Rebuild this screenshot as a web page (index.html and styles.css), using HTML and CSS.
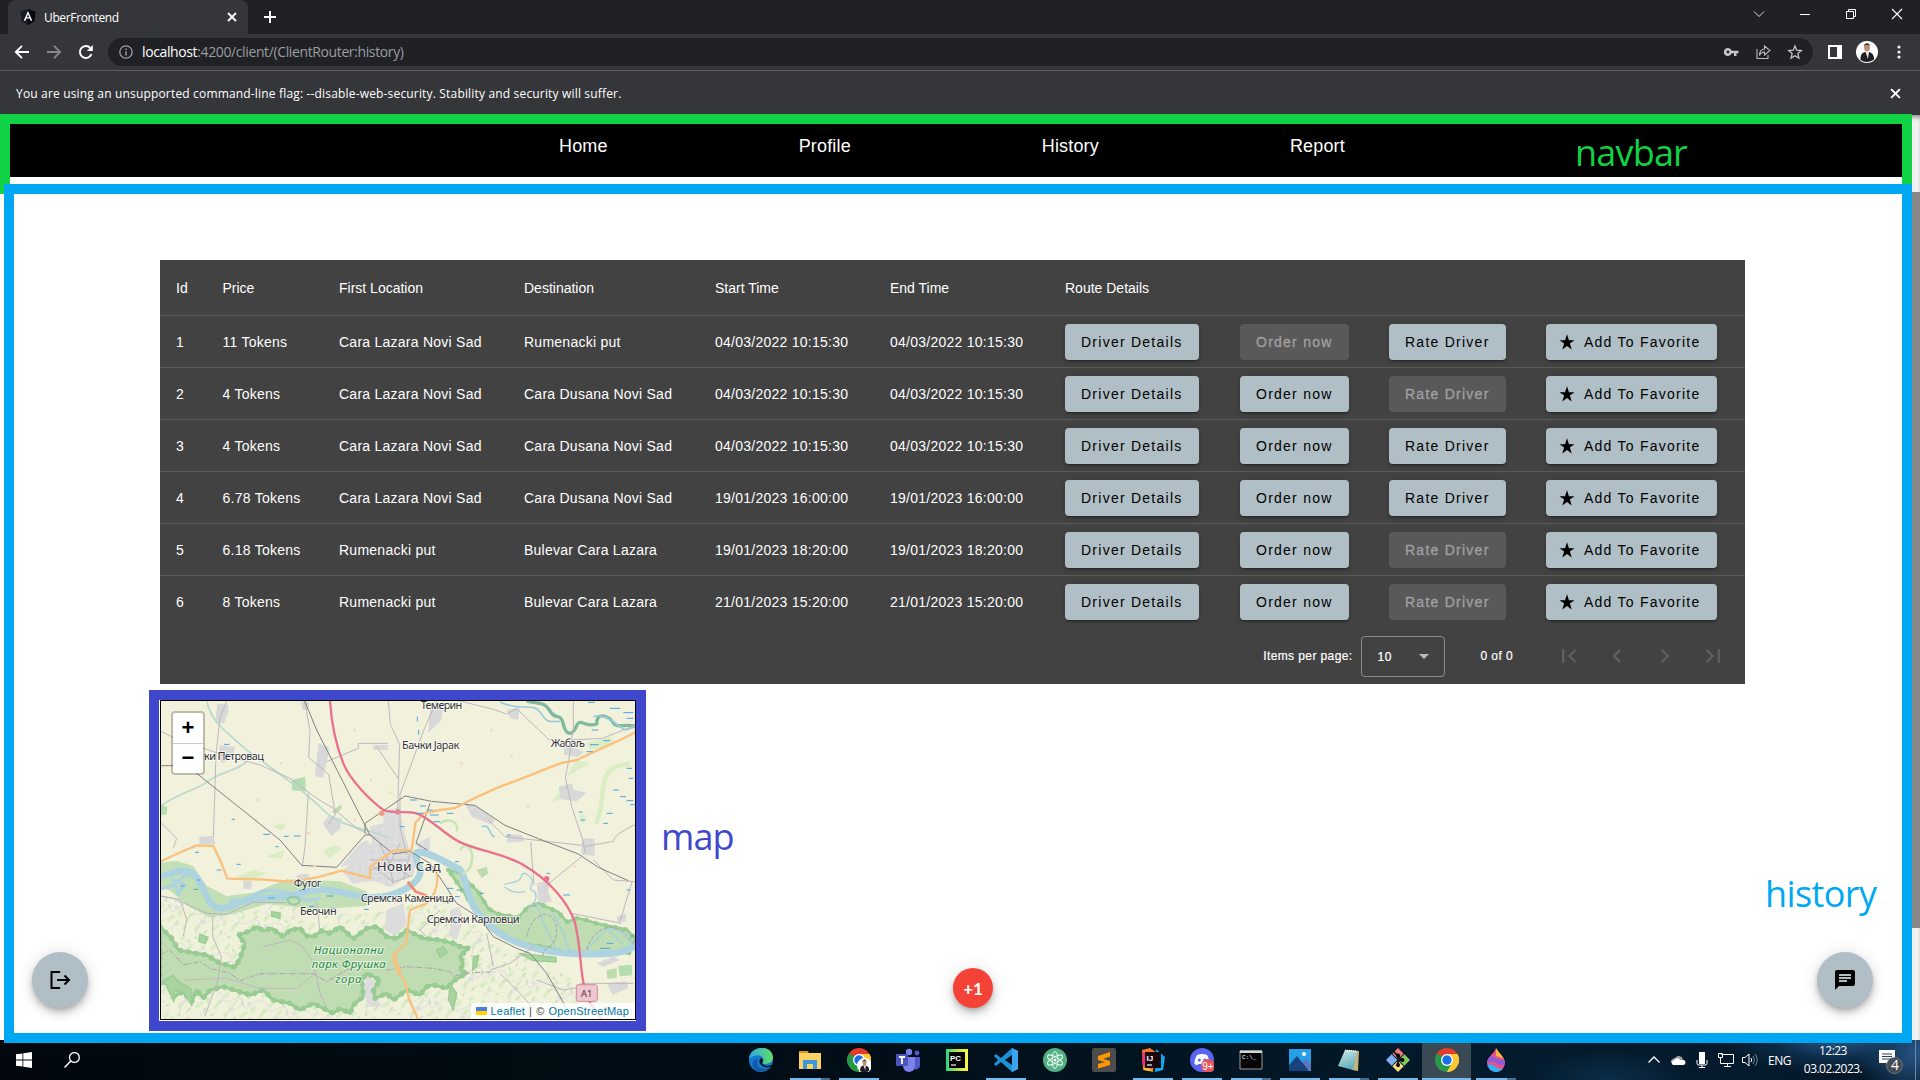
FILE: index.html
```html
<!DOCTYPE html>
<html lang="en">
<head>
<meta charset="utf-8">
<title>UberFrontend</title>
<link rel="stylesheet" href="styles.css">
</head>
<body>
<svg class="defs" aria-hidden="true">
  <symbol id="star" viewBox="0 0 24 24"><path d="M12 1.500 14.600 9.500H22l-6.200 4.600L18.300 22 12 17.300 5.700 22l2.500-7.900L2 9.500h7.400z"/></symbol>
  <symbol id="close" viewBox="0 0 10 10"><path d="M1 1 9 9M9 1 1 9" fill="none" stroke="currentColor" stroke-width="1.800"/></symbol>
  <symbol id="chrome" viewBox="0 0 24 24">
    <path d="M12 12 1.600 6A12 12 0 0 1 22.400 6z" fill="#e33b2e"/>
    <path d="M12 12 22.400 6A12 12 0 0 1 12 24z" fill="#fcc934"/>
    <path d="M12 12v12A12 12 0 0 1 1.600 6z" fill="#279847"/>
    <path d="M12 6h10.400a12 12 0 0 1 1 9L17 14z" fill="#fcc934"/>
    <path d="m17 15-5 9h-1l-3-6z" fill="#279847"/><path d="m17 15-5 9 5-1z" fill="#fcc934"/>
    <path d="m1.600 6 5.200 9L8 8z" fill="#279847"/>
    <circle cx="12" cy="12" r="6" fill="#fff"/><circle cx="12" cy="12" r="4.700" fill="#1a6fe8"/>
  </symbol>
  <symbol id="avatar" viewBox="0 0 22 22">
    <circle cx="11" cy="11" r="11" fill="#fff"/>
    <path d="M4.500 19c0-5 1-7 4.500-8h4c3.500 1 5 3 5 7.500A11 11 0 0 1 4.500 19z" fill="#1d1d22"/>
    <path d="M9.500 11h3.500l-1 7z" fill="#e8e8ea"/>
    <ellipse cx="11" cy="6.500" rx="2.900" ry="4" fill="#c08d72"/><path d="M8 6c-.3-5 6.300-5 6 0l-.8-2H9z" fill="#3a2820"/>
  </symbol>
</svg>

<header class="tabstrip">
  <div class="tab">
    <svg class="favicon" viewBox="0 0 16 16"><path d="M8 0 15.500 2.700 14.300 12.500 8 16 1.700 12.500.5 2.700z" fill="#151a24"/><path d="M8 0v16l6.300-3.500L15.500 2.700z" fill="#05080f"/><path d="M8 2 3.700 11.800h1.700l.9-2.200h3.400l.9 2.200h1.700zm0 3.200 1.200 3H6.800z" fill="#fff"/></svg>
    <span class="tab-title">UberFrontend</span>
    <svg class="tab-close"><use href="#close"/></svg>
  </div>
  <svg class="new-tab" viewBox="0 0 12 12"><path d="M6 0v12M0 6h12" stroke="#fff" stroke-width="2"/></svg>
  <div class="window-controls">
    <svg viewBox="0 0 12 12"><path d="m1 3.500 5 5 5-5" fill="none" stroke="#ddd"/></svg>
    <svg viewBox="0 0 12 12"><path d="M1 6.500h10" stroke="#fff"/></svg>
    <svg viewBox="0 0 12 12"><path d="M1.500 3.500h7v7h-7zM3.500 3.500v-2h7v7h-2" fill="none" stroke="#fff"/></svg>
    <svg viewBox="0 0 12 12"><path d="m1 1 10 10M11 1 1 11" stroke="#fff" stroke-width="1.100"/></svg>
  </div>
</header>

<div class="toolbar">
  <svg class="nav-icon" viewBox="0 0 16 16"><path d="M15 8H2M8 1.800 1.800 8 8 14.200" fill="none" stroke="#fff" stroke-width="1.900"/></svg>
  <svg class="nav-icon" viewBox="0 0 16 16"><path d="M1 8h13M8 1.800 14.200 8 8 14.200" fill="none" stroke="#85868a" stroke-width="1.900"/></svg>
  <svg class="nav-icon" viewBox="0 0 16 16"><path d="M13.500 10.200A6 6 0 1 1 12.400 4" fill="none" stroke="#fff" stroke-width="1.900"/><path d="M14.800 1v6h-6z" fill="#fff"/></svg>
  <div class="omnibox">
    <svg class="info" viewBox="0 0 14 14"><circle cx="7" cy="7" r="6.200" fill="none" stroke="#9aa0a6" stroke-width="1.300"/><path d="M7 6.200v4.300M7 3.500V5" stroke="#9aa0a6" stroke-width="1.500"/></svg>
    <span class="url"><b>localhost</b>:4200/client/(ClientRouter:history)</span>
    <span class="omni-icons">
      <svg viewBox="0 0 16 16"><path d="M5 4a4 4 0 1 0 3.700 5.300H11V12h2.500V9.300H15.500V6.700H8.700A4 4 0 0 0 5 4zm0 2.600a1.400 1.400 0 1 1 0 2.800 1.400 1.400 0 0 1 0-2.800z" fill="#c4c7ca"/></svg>
      <svg viewBox="0 0 16 16"><path d="M2 5v9.500h11V11M9.500 5V2l5.500 4.500L9.500 11V8C7 8 5.500 9 4.500 11.500 4.500 7.500 6.500 5.300 9.500 5z" fill="none" stroke="#b9bcc0" stroke-width="1.100"/></svg>
      <svg viewBox="0 0 24 24"><path d="m12 3 2.600 6.300 6.900.6-5.200 4.500 1.600 6.700L12 17.500l-5.900 3.600 1.600-6.700L2.500 9.900l6.900-.6z" fill="none" stroke="#c4c7ca" stroke-width="1.900"/></svg>
    </span>
  </div>
  <svg class="panel" viewBox="0 0 14 14"><path d="M0 0h14v14H0zM2 2v10h7V2z" fill="#fff" fill-rule="evenodd"/></svg>
  <svg class="avatar"><use href="#avatar"/></svg>
  <svg class="more" viewBox="0 0 4 14"><g fill="#f1f1f1"><circle cx="2" cy="2" r="1.600"/><circle cx="2" cy="7" r="1.600"/><circle cx="2" cy="12" r="1.600"/></g></svg>
</div>

<div class="infobar">
  <span>You are using an unsupported command-line flag: --disable-web-security. Stability and security will suffer.</span>
  <svg><use href="#close"/></svg>
</div>

<main class="viewport">
  <div class="page">
    <nav class="navbar"><a>Home</a><a>Profile</a><a>History</a><a>Report</a></nav>
    <section class="history">
      <div class="history-table">
        <div class="row head"><span>Id</span><span>Price</span><span>First Location</span><span>Destination</span><span>Start Time</span><span>End Time</span><span>Route Details</span></div>
        <div class="row"><span>1</span><span>11 Tokens</span><span>Cara Lazara Novi Sad</span><span>Rumenacki put</span><span>04/03/2022 10:15:30</span><span>04/03/2022 10:15:30</span><button>Driver Details</button><button disabled>Order now</button><button>Rate Driver</button><button class="fav"><svg><use href="#star"/></svg>Add To Favorite</button></div>
        <div class="row"><span>2</span><span>4 Tokens</span><span>Cara Lazara Novi Sad</span><span>Cara Dusana Novi Sad</span><span>04/03/2022 10:15:30</span><span>04/03/2022 10:15:30</span><button>Driver Details</button><button>Order now</button><button disabled>Rate Driver</button><button class="fav"><svg><use href="#star"/></svg>Add To Favorite</button></div>
        <div class="row"><span>3</span><span>4 Tokens</span><span>Cara Lazara Novi Sad</span><span>Cara Dusana Novi Sad</span><span>04/03/2022 10:15:30</span><span>04/03/2022 10:15:30</span><button>Driver Details</button><button>Order now</button><button>Rate Driver</button><button class="fav"><svg><use href="#star"/></svg>Add To Favorite</button></div>
        <div class="row"><span>4</span><span>6.78 Tokens</span><span>Cara Lazara Novi Sad</span><span>Cara Dusana Novi Sad</span><span>19/01/2023 16:00:00</span><span>19/01/2023 16:00:00</span><button>Driver Details</button><button>Order now</button><button>Rate Driver</button><button class="fav"><svg><use href="#star"/></svg>Add To Favorite</button></div>
        <div class="row"><span>5</span><span>6.18 Tokens</span><span>Rumenacki put</span><span>Bulevar Cara Lazara</span><span>19/01/2023 18:20:00</span><span>19/01/2023 18:20:00</span><button>Driver Details</button><button>Order now</button><button disabled>Rate Driver</button><button class="fav"><svg><use href="#star"/></svg>Add To Favorite</button></div>
        <div class="row"><span>6</span><span>8 Tokens</span><span>Rumenacki put</span><span>Bulevar Cara Lazara</span><span>21/01/2023 15:20:00</span><span>21/01/2023 15:20:00</span><button>Driver Details</button><button>Order now</button><button disabled>Rate Driver</button><button class="fav"><svg><use href="#star"/></svg>Add To Favorite</button></div>
        <div class="paginator">
          <span>Items per page:</span>
          <div class="select"><span>10</span><i></i></div>
          <span class="range">0 of 0</span>
          <div class="pager">
            <svg viewBox="0 0 24 24"><path d="M18.410 16.590 13.820 12l4.590-4.590L17 6l-6 6 6 6zM6 6h2v12H6z"/></svg>
            <svg viewBox="0 0 24 24"><path d="M15.410 7.410 14 6l-6 6 6 6 1.410-1.410L10.830 12z"/></svg>
            <svg viewBox="0 0 24 24"><path d="M10 6 8.590 7.410 13.170 12l-4.580 4.590L10 18l6-6z"/></svg>
            <svg viewBox="0 0 24 24"><path d="M5.590 7.410 10.180 12l-4.590 4.590L7 18l6-6-6-6zM16 6h2v12h-2z"/></svg>
          </div>
        </div>
      </div>

      <div class="map-row">
        <div class="map-mark">
          <div class="map">
            <svg class="tiles" viewBox="63 63 1422 954" preserveAspectRatio="none">
              <defs>
                <pattern id="hills" width="137" height="119" patternUnits="userSpaceOnUse" patternTransform="rotate(12)">
                  <rect width="137" height="119" fill="#eff1db"/>
                  <path d="M4 20 14 4l6 3-8 20zM30 40l12-14 6 4-9 18zM66 18l10-12 7 6-12 12zM10 82l9-26 7 4-9 28zM58 64l14-20 5 6-11 18zM100 30l12-22 8 6-14 24zM90 90l18-20 6 8-16 18zM40 100l10-18 8 6-12 20zM120 60l10-10 2 18-10 8z" fill="#d9ebc4"/>
                  <path d="m22 66 8-12M48 12l4-10M74 36l8-12M36 26l-8-8M70 110l10-14M118 100l6-12M94 56l-6-10M6 108l8-8" stroke="#c0dfb0" stroke-width="4"/>
                  <path d="M0 34q24-6 30 14t32-2 32 8 40-24M50 119q-6-30 14-40t30-30M110 119q4-20 27-24" fill="none" stroke="#d6d1d6" stroke-width="2"/>
                  <path d="M52 72l14-4 4 12-12 4zM108 42l10 2-4 12-8-4z" fill="#dedede"/>
                </pattern>
                <pattern id="blocks" width="20" height="20" patternUnits="userSpaceOnUse"><rect width="20" height="20" fill="#dadada"/><path d="M0 6h20M8 0v20" stroke="#e4e4e2" stroke-width="2"/></pattern>
                <path id="park" d="M60 740 95 775 115 810 165 820 200 825 240 850 285 862 300 835 315 790 295 765 325 755 350 740 370 752 395 745 430 770 450 750 480 745 500 768 520 770 545 752 570 760 600 740 640 776 680 745 710 740 740 770 770 776 800 750 850 775 900 780 940 790 960 800 985 805 960 830 970 850 960 870 980 880 945 900 920 925 880 915 860 920 840 945 800 930 760 960 740 940 705 955 700 930 720 900 680 880 665 900 670 950 640 975 630 1000 600 985 580 1000 520 970 480 990 450 970 400 960 370 930 330 945 250 920 210 930 190 955 170 930 155 965 130 935 100 950 85 910 60 910z"/>
                <path id="wetland" d="m925 570 30 6 60 60 30 50 30 16 60 10 30-32 30-10 60 26 26 30 30-12 30 7 30 10 90 18 26 30-20 40-180 0-80-20-80-10-84-60-40-40-30-50z"/>
              </defs>
              <rect x="60" y="60" width="1430" height="960" fill="#f2f1dc"/>
              <path d="M60 650 200 680 260 700 350 670 460 665 560 700 700 700 800 680 890 640 980 700 1050 790 1200 840 1300 900 1330 1020H60z" fill="url(#hills)"/>
              <!-- fields and meadows -->
              <path d="m455 300 40-10 3 45-42-4zM60 375l22 5-2 22-20 4zM1435 857l40-3 2 32-38 3z" fill="#b5deb0"/>
              <path d="m290 590 50-20 40 10-60 25zM400 440l20-12 20 10-16 14zM375 530l60-20-10 26zM550 510l36-14 20 10-40 30zM340 420l14-8-3 14zM740 340l20-8-6 14zM1340 190l70-20 20 20-80 20zM1310 240l40 10-70 40zM1320 400l16 6-6 26-12-10zM1235 365l30-40 10 30z" fill="#dbedc5"/>
              <path d="M1470 252q-74 0-80 70t-22 110" fill="none" stroke="#dbedc5" stroke-width="14"/>
              <path d="m1400 870 30-6v30l-28 2zM1200 700l20 6-10 10zM575 395l28-22 3 12-20 18zM1010 570l30-10 5 20-20 14z" fill="#bcdcae"/>
              <!-- settlements -->
              <g fill="#d8d8d8">
                <path d="m232 70 32 4 2 20-14 36-26-2zM240 196l44 4-4 30-30 20-18-14zM482 63l26 4-4 24-16-2zM535 190l32 12-4 30-14 62-24-6zM870 90l40-20-6 50-40 40zM548 430l20-24 38 10-6 30-26 22zM178 470l40-2 10 24-50 2zM470 585l34-4 10 24-40 4zM310 604l26 0-2 24-24-2z"/>
                <path d="m1100 90 40-10-6 40-24-6zM1256 320l40-10 6 20 38 8-30 26-48-6zM1272 190l20 6 40 20-20 16-40-8zM1330 475l34 2v50l-40-2v-30zM975 372l30 4 60 44-10 14-60-24zM1100 464l46 0 6 20-50 4zM1190 610l40-10-6 34 12 30-40 10zM1430 710l28-10 0 24-24 4zM1400 910l60-6 4 20-46 20zM1440 840l-50 20-20-10 50-20zM700 195h44v14h-44z"/>
              </g>
              <path d="m690 440 50-14 46 6 24 84 24 20-14 46-70 40-50-20-60 10-34-40 60-50 30-36zM728 395l50-14 10 50-56 10zM830 490l40-20v40l-34 10z" fill="url(#blocks)"/>
              <path d="m600 560 60-70 24-10 10 30-30 40zM740 690l50-20 10 60-36 40-28-20zM680 890l24 10-2 40 24 40-40 0-16-40zM930 690l30-10 10 40-20 60-20-10z" fill="#dcdcdc"/>
              <!-- national park -->
              <use href="#park" fill="#c0dcb3" stroke="#98cc93" stroke-width="9" stroke-linejoin="round"/>
              <use href="#park" fill="none" stroke="#98cc93" stroke-width="16" stroke-linecap="round" stroke-dasharray="1 23"/>
              <path d="m70 900 30-14 12 16 40 24 4 52-24-40-30-6 0 34zM180 762l24 10-8 18-20-6zM395 695l26 4-2 16-24-6zM1000 830l16-4-6 34-12 10zM930 910l20 30-10 50-14-30zM890 810l20-10 12 18-22 14z" fill="#a8d39f" stroke="#98cc93" stroke-width="4"/>
              <!-- wetlands along the river -->
              <path d="m60 548 50-6 50 16 40 60 60 30 80-10 100-40 160 6 80 30v44l-140 10-160-16-100 30-70 10-60-30-60-50-40-20-30 4z" fill="#c3dfb6"/>
              <use href="#wetland" fill="#c0dcb3" stroke="#98cc93" stroke-width="8" stroke-linejoin="round"/>
              <use href="#wetland" fill="none" stroke="#98cc93" stroke-width="14" stroke-linecap="round" stroke-dasharray="1 29"/>
              <path d="m1138 820 110 12v14l-70-4z" fill="#aad6a2" stroke="#98cc93" stroke-width="4"/>
              <!-- Danube -->
              <path d="M60 590c40-10 60-25 90-14 30 14 40 60 60 90 16 24 40 24 70 10 40-24 100-20 150-26 50-6 80-26 130-20 60 6 100 26 150 22 60-4 120-36 130-70 6-28-20-40-10-64 20-10 70 20 130 50 20 30 20 70 40 110 24 40 70 90 150 116 80 30 200 30 270 26 40-6 60-20 75-26" fill="none" stroke="#acd3df" stroke-width="20"/>
              <path d="M60 625c60 0 60-50 100-40M270 660c70 10 70-40 150-26s60 40 120 20M100 600l34 14-20 26z" fill="none" stroke="#acd3df" stroke-width="10"/>
              <path d="M60 648 100 655 200 700 260 703 340 667 440 668" fill="none" stroke="#b8b2bb" stroke-width="3"/>
              <path d="M442 658c8-12 34-8 38 4-6 14-32 18-38-4z" fill="none" stroke="#93c9a5" stroke-width="6"/>
              <path d="M1094 615c0-10 40 0 50-24 2-20 16-10 30 4s-20 30 10 40c12 20-6 40-18 50M1094 620c20 20 40 20 60 14M1190 670l20 60 40 80M1240 700l30 60 20 60M1340 810l60-66 40 10 40 40M1400 744l50 50" fill="none" stroke="#a6d0e0" stroke-width="4"/>
              <path d="M1160 770c20-90 90-80 90-20s-50 50-40 80M1340 810c20-70 90-100 140-20" fill="none" stroke="#a8a3a8" stroke-width="3" stroke-dasharray="12 5"/>
              <!-- streams -->
              <path d="M200 60c10 60 50 90 120 150 80 60 160 110 230 180 40 40 90 50 140 64l60 20M60 380c50-40 120-54 140-74 40-30 80-30 120-60" fill="none" stroke="#b7d9cd" stroke-width="5"/>
              <path d="M1160 63c30 10 50-2 70 30s30 0 40 40 30 30 40 4 30 10 60-6c0-40 40-20 50-2s40 0 65 10" fill="none" stroke="#7fba9e" stroke-width="10"/>
              <path d="M1360 110c20-10 60 10 80 30s30 0 48 2M1080 66c60 30 100 0 120 30s20 30 60 28M1025 440c30-10 20 30 40 30" fill="none" stroke="#9dcadb" stroke-width="5"/>
              <path d="M960 510c20-30 40 0 36 30s-20 40-30 40M900 430c30-20 60 0 50 24" fill="none" stroke="#c9e5b7" stroke-width="8"/>
              <!-- minor roads -->
              <g fill="none" stroke="#bdb8bf" stroke-width="3">
                <path d="M60 152 110 178M190 205l60 20 110 30 90 40 80 60 50 30 70 60 60 30M260 63l-20 50-12 110-8 250M60 425l50 50-10 30M505 340l-10 160-8 60M494 63l16 90-4 80 60 50 20 120-22 30M560 245l95-40v-15h90M710 200l65 96M745 63l6 70 28 60-6 200M890 63l-40 90-40 110-30 80v100l20 80"/>
                <path d="m960 63 100 25 40 14 30-16 100 96M1300 63v80l-14 100-10 50 20 90 30 90 10 46M1045 420l50 50 230 26M1172 485l10 130M1325 530l-110 90M1330 500l90-16q0-20 65-50M1476 605l-36 120M1294 700l150 30M1488 135l-100 40-100 5M1360 540l60 60 65 5"/>
                <path d="m218 710 0 60 26 60-10 70-40 110M60 648l60 10 20 60-10 50M530 665l10 90M525 870l15 70 20 44M900 690l-60 60 30 30M1050 870l60-20 70-50M1040 760l20 100M1190 900l80 30 60-10M1320 910h160M1080 880l60 60 70 80M370 800l80-20 40 20 30 50"/>
                <path d="m700 560 60 46 60-20M720 490l20 50 70 50M740 520l20 90M780 490l-30 60-60 20M810 520l-20 80M690 540l110 0"/>
              </g>
              <path d="M60 825 90 810 130 855 180 845 210 865 270 880 300 902 360 881H520L560 905 620 870 680 850 740 870 800 860 880 865 930 875 940 890 970 880 1060 875" fill="none" stroke="#b09fb1" stroke-width="3" stroke-dasharray="16 5 5 5"/>
              <path d="M130 900 260 895 360 925 470 925 520 885" fill="none" stroke="#c4b9c2" stroke-width="3"/>
              <!-- railways -->
              <g fill="none" stroke="#808080" stroke-width="3">
                <path d="M494 63 530 150 690 465 760 522 810 514 870 550 905 600 950 670 1020 715 1060 770 1130 805 1170 820 1220 880 1280 985"/>
                <path d="M60 257h40M170 280 420 480 485 556 590 562 675 465 690 465M675 430l120-82 80 16 130 12 90 60 100 40 120 46 60 40 90 40M870 370l-42 120 34 20M675 430v30"/>
              </g>
              <!-- main roads -->
              <path d="M60 545 110 522 170 496 220 498 240 540 262 596 360 598 460 606 540 590 605 572 690 594 690 560 760 512 815 510 826 430 850 400 900 390 945 384 1000 356 1080 320 1160 290 1260 250 1310 240 1370 212 1440 180 1490 155M890 580q10 50-30 90l-50 20-12 100-34 30 10 60 20 20 14 60 32 70" fill="none" stroke="#f8c17d" stroke-width="7" stroke-linejoin="round"/>
              <path d="m762 820 4 30 16 28" fill="none" stroke="#f8c17d" stroke-width="11"/>
              <path d="M803 605l24 30 34 12" fill="none" stroke="#f28b6d" stroke-width="8"/>
              <path d="M570 63C575 140 590 200 610 250S690 360 730 390c30 12 70 2 100 10 40 14 80 60 125 84 60 30 140 36 200 74 70 40 130 110 150 170 20 80 14 150 30 200 6 30 20 50 30 60l20 30" fill="none" stroke="#e8718c" stroke-width="7"/>
              <circle cx="773" cy="396" r="8" fill="#e08a8c"/><circle cx="725" cy="400" r="8" fill="#f49a80"/><circle cx="1220" cy="596" r="8" fill="#e8718c"/>
              <!-- ponds and canals -->
              <path d="M252 193h16M275 418h10M370 463h20M432 469h14M462 468h20M406 500h10M165 517h12M290 553h12M230 570h14M170 600h10M120 618h14M160 628h14M480 632h16M560 648h20M385 654h18M508 679h16M568 686h18M672 688h14M832 110v14M836 150v14M810 360h20M840 378h18M860 390h18M830 400h20M780 440h14M950 630h16M920 625h20M945 650h14M1270 645h20M1345 67h20M1410 85h30M1450 98h30M1460 115h20M1355 150h20M1390 182h20M1350 194h26M1340 215h18M1460 265h16M1466 295h14M1420 330h16M1440 350h18M1470 374h14M1400 400h18M1390 430h14M1460 362h20M1316 396h12M1322 420h14M1400 790h20M1380 805h30M1470 768h14M1460 630h12M1100 465h12M1020 640h12M870 405h26M880 425h20M920 400h20M945 545h12M1220 580h10" stroke="#45a4e6" stroke-width="3"/>
              <path d="M150 220h12M520 560h8M640 420h8M690 300h6M420 250h8M350 360h8M500 460h12M100 520h8M640 150h8M1110 230h8M1160 380h8M960 250h10M1050 150h8M1300 560h8" stroke="#f6d9c0" stroke-width="8"/>
              <g class="map-labels">
                <text x="842" y="87" textLength="125">Темерин</text>
                <text x="786" y="208" textLength="172">Бачки Јарак</text>
                <text x="1232" y="201" textLength="103">Жабаљ</text>
                <text x="192" y="241" textLength="180">ки Петровац</text>
                <text x="710" y="572" textLength="192" class="city">Нови Сад</text>
                <text x="461" y="621" textLength="84">Футог</text>
                <text x="662" y="667" textLength="280">Сремска Каменица</text>
                <text x="480" y="706" textLength="110">Беочин</text>
                <text x="860" y="728" textLength="279">Сремски Карловци</text>
                <text x="521" y="822" textLength="210" class="park">Национални</text>
                <text x="515" y="865" textLength="222" class="park">парк Фрушка</text>
                <text x="586" y="908" textLength="78" class="park">гора</text>
              </g>
              <rect x="1309" y="914" width="63" height="50" rx="6" fill="#ecc8d0" stroke="#d5899c" stroke-width="3"/>
              <text x="1323" y="951" class="shield">A1</text>
            </svg>
            <div class="zoom"><span>+</span><span>−</span></div>
            <div class="credit"><i></i><a>Leaflet</a><span>|</span><span>©</span><a>OpenStreetMap</a></div>
          </div>
        </div>
        <span class="note note-map">map</span>
      </div>
    </section>
  </div>
  <div class="scrollbar"><i></i></div>

  <button class="fab logout"><svg viewBox="0 0 24 24"><path d="M12.200 4H3.500v16h8.700M9 12h11.500M16.500 7.500 21 12l-4.500 4.500" fill="none" stroke="#000" stroke-width="2"/></svg></button>
  <button class="fab chat"><svg viewBox="0 0 24 24"><path d="M20 2H4a2 2 0 0 0-1.990 2L2 22l4-4h14a2 2 0 0 0 2-2V4a2 2 0 0 0-2-2zM6 9h12v2H6zm8 5H6v-2h8zm4-6H6V6h12z"/></svg></button>
  <button class="fab plus">+1</button>
  <div class="frame frame-nav"></div>
  <div class="frame frame-history"></div>
  <span class="note note-navbar">navbar</span>
  <span class="note note-history">history</span>
</main>

<footer class="taskbar">
  <svg class="start" viewBox="0 0 16 16"><path d="M0 2.300 6.500 1.400v6.100H0zM7.300 1.200 16 0v7.500H7.300zM0 8.400h6.500v6.200L0 13.700zM7.300 8.400H16V16l-8.700-1.200z" fill="#fff"/></svg>
  <svg class="search" viewBox="0 0 16 16"><circle cx="10.400" cy="5.500" r="4.900" fill="none" stroke="#fff" stroke-width="1.300"/><path d="M6.800 9 .5 15.500" stroke="#fff" stroke-width="1.500"/></svg>
  <div class="apps">
    <span class="app"><svg viewBox="0 0 24 24"><defs><linearGradient id="eg" x1="0" x2="1"><stop stop-color="#2aa9e8"/><stop offset="1" stop-color="#62de62"/></linearGradient></defs><circle cx="12" cy="12" r="12" fill="#1479cf"/><path d="M0 11C1-3 23-4 24 9c0 5-4 7-8 7-3 0-3-2-2-3 2-5-6-9-14-2z" fill="url(#eg)"/><path d="M9 11c-4 7 3 12 12 9-6 6-18 4-17-4 0-3 2-5 5-5z" fill="#1558a6"/><path d="M14 13c-3 4 4 7 10 3v2c-7 4-16-1-13-7 1-1 4 0 3 2z" fill="#06131f"/></svg></span>
    <span class="app open multi"><svg viewBox="0 0 24 24"><path d="M1 3h9l1 3h-10z" fill="#d99a17"/><path d="M1 5h22v16H1z" fill="#fbd065"/><path d="M5 12h14v9h-4v-5H9v5H5z" fill="#3e97dc"/></svg></span>
    <span class="app open"><svg viewBox="0 0 24 24"><use href="#chrome"/><use href="#avatar" x="10" y="10" width="15" height="15"/></svg></span>
    <span class="app"><svg viewBox="0 0 24 24"><circle cx="13" cy="4" r="3.200" fill="#7b83eb"/><circle cx="21" cy="5" r="2.400" fill="#5059c9"/><path d="M15 9h9v7a4 4 0 0 1-9 2z" fill="#5059c9"/><path d="M7 9h12v9a6 6 0 0 1-12 0z" fill="#7b83eb"/><rect y="6" width="12" height="12" rx="1" fill="#4b53bc"/><path d="M3 9h6M6 9v7" stroke="#fff" stroke-width="1.800"/></svg></span>
    <span class="app"><svg viewBox="0 0 24 24"><defs><linearGradient id="pc" x1="0" x2="1"><stop stop-color="#21d789"/><stop offset=".5" stop-color="#b5e33b"/><stop offset="1" stop-color="#fcf84a"/></linearGradient></defs><path d="M1 1h22v22H1z" fill="url(#pc)"/><path d="M4 4h16v16H4z"/><text x="5" y="12.500" class="ico8">PC</text><path d="M6 17h5" stroke="#fff" stroke-width="1.200"/></svg></span>
    <span class="app open"><svg viewBox="0 0 24 24"><path d="m18 0 6 3v18l-6 3L7 14l-5 4-2-2 4-4-4-4 2-2 5 4zm0 7-7 5 7 5z" fill="#1f8fd8"/><path d="m18 0 6 3v18l-6 3z" fill="#3ba5ef"/></svg></span>
    <span class="app"><svg viewBox="0 0 24 24"><circle cx="12" cy="12" r="12" fill="#50b083"/><g fill="none" stroke="#e8f6ee" stroke-width="1"><ellipse cx="12" cy="12" rx="3" ry="8.500"/><ellipse cx="12" cy="12" rx="3" ry="8.500" transform="rotate(60 12 12)"/><ellipse cx="12" cy="12" rx="3" ry="8.500" transform="rotate(-60 12 12)"/></g><circle cx="12" cy="12" r="1.500" fill="#fff"/></svg></span>
    <span class="app"><svg viewBox="0 0 24 24"><rect width="24" height="24" rx="2" fill="#4c4c4c"/><path d="m6 8 12-4v4.500L11 11l7 2v4L6 20.500V16l7-2-7-2z" fill="#ff9800"/></svg></span>
    <span class="app open"><svg viewBox="0 0 24 24"><path d="M1 2 9 0l7 5-4 18-10-1z" fill="#f9762f"/><path d="m2 4 7 4-5 12-3-6z" fill="#f62c78"/><path d="m15 1 9 8-2 13-8 2z" fill="#12a7f0"/><path d="m4 18 9 6-10-2z" fill="#fdc82f"/><path d="M4 4h16v16H4z" fill="#17070f"/><text x="5.500" y="12.500" class="ico8">IJ</text><path d="M6 17h5" stroke="#fff" stroke-width="1.200"/></svg></span>
    <span class="app open"><svg viewBox="0 0 24 24"><circle cx="12" cy="12" r="12" fill="#5865f2"/><path d="M7 7q5-2 10 0 3 5 2.500 9-3 2-4 0h-7q-1 2-4 0Q4 12 7 7z" fill="#fff"/><circle cx="9.300" cy="12" r="1.500" fill="#5865f2"/><circle cx="14.700" cy="12" r="1.500" fill="#5865f2"/><circle cx="18" cy="18" r="7" fill="#e4565c"/><text x="12.200" y="21.500" class="ico9">9+</text></svg></span>
    <span class="app open multi"><svg viewBox="0 0 24 24"><path d="M1 3h22v18H1z" fill="#050505" stroke="#9a9a9a"/><path d="M1 2.500h22v2.500H1z" fill="#d6d6d6"/><text x="3" y="11" class="ico6">C:\_</text></svg></span>
    <span class="app open"><svg viewBox="0 0 24 24"><path d="M1 1h22v22H1z" fill="#269ee8"/><path d="M13 16 18 11l5 5v7z" fill="#5d72bb"/><path d="M1 17 9 8l12 15H1z" fill="#17437d"/><circle cx="16" cy="6" r="2" fill="#fff"/></svg></span>
    <span class="app open multi"><svg viewBox="0 0 24 24"><defs><linearGradient id="np" y1="0" y2="1" x2=".4"><stop stop-color="#d4e9eb"/><stop offset="1" stop-color="#5fb0bb"/></linearGradient></defs><path d="M9 2 22 3l-1 20-6-1z" fill="#c9b27a"/><path d="M8 2 20 3l-4 19-15-4z" fill="url(#np)"/><path d="M8 2.500 20 3.500" stroke="#eee" stroke-width="2" stroke-dasharray="1 1"/></svg></span>
    <span class="app open"><svg viewBox="0 0 24 24"><g transform="rotate(45 12 12)"><path d="M3.500 3.500h8v8h-8z" fill="#f07d7c"/><path d="M12.500 3.500h8v8h-8z" fill="#80cd5b"/><path d="M3.500 12.500h8v8h-8z" fill="#7fb0f5"/><path d="M12.500 12.500h8v8h-8z" fill="#fbd97a"/></g><path d="m8 4 8 8h-4v7M12 7v8" fill="none" stroke="#141b22" stroke-width="1.800"/><circle cx="12" cy="7.500" r="2"/><circle cx="16.500" cy="12" r="2"/><circle cx="12" cy="17" r="2"/></svg></span>
    <span class="app open active"><svg><use href="#chrome"/></svg></span>
    <span class="app open multi"><svg viewBox="0 0 24 24"><defs><clipPath id="drop"><path d="M12 0c3 6 9 9 9 15a9 9 0 0 1-18 0C3 9 10 6 12 0z"/></clipPath></defs><g clip-path="url(#drop)"><path d="M0 0h24v24H0z" fill="#e8508f"/><path d="M12 0h9l3 12-12-4z" fill="#fbb934"/><path d="M0 13q6-7 12-3t12 0v5q-8 4-12 0t-12 3z" fill="#8c5bd6"/><path d="M0 19q7-5 12 0t12-3v8H0z" fill="#29b6f6"/></g></svg></span>
  </div>
  <div class="tray">
    <svg class="t-up" viewBox="0 0 12 12"><path d="m.5 8.500 5.500-5.500 5.500 5.500" fill="none" stroke="#fff" stroke-width="1.300"/></svg>
    <svg viewBox="0 0 16 16"><path d="M5 6a4.500 4.500 0 0 1 8 1l-6 5-6-1Q0 7 5 6z" fill="#989ea3"/><path d="M3 13a2.500 2.500 0 0 1 .5-4.500Q7 4.500 10.500 8q5-1 5 3-.3 2-2.500 2z" fill="#fff"/></svg>
    <svg viewBox="0 0 16 16"><path d="M5 0h6v12H5z" fill="#fff"/><path d="M3 8v3.500q0 1.500 2 1.500h6q2 0 2-1.500V8M8 13v2.500M5 15.500h6" fill="none" stroke="#fff"/></svg>
    <svg viewBox="0 0 16 16"><path d="M3 2.500h12.500v9H5M.5 1.500h4v4h-4zM2.500 5.500v6H5M9.500 11.500v3M6 14.500h7" fill="none" stroke="#fff"/></svg>
    <svg viewBox="0 0 16 16"><path d="M.5 5.500H3L7 2v12L3 10.500H.5z" fill="none" stroke="#fff"/><path d="M9 6q1.500 2 0 4" fill="none" stroke="#fff"/><path d="M11 4q3 4 0 8M13 2q4.500 6 0 12" fill="none" stroke="#738490"/></svg>
    <span class="lang">ENG</span>
    <span class="clock"><span>12:23</span><span>03.02.2023.</span></span>
    <svg class="notify" viewBox="0 0 24 24"><path d="M0 0h16v13h-5v3l-4-3H0z" fill="#fff"/><path d="M3 4h10M3 6.500h10M3 9h10" stroke="#23435f"/><circle cx="15.500" cy="15.500" r="8" fill="#454b52" stroke="#7d858c" stroke-width=".7"/><text x="12" y="20" class="badge">4</text></svg>
    <i class="peek"></i>
  </div>
</footer>
</body>
</html>
```
FILE: styles.css
```css
* { box-sizing: border-box; }
body { margin: 0; width: 1920px; height: 1080px; overflow: hidden; display: flex; flex-direction: column; background: #fff; font-family: "Liberation Sans", Arial, sans-serif; }
svg { display: block; flex: none; }
.defs { position: absolute; width: 0; height: 0; }
button { border: 0; font-family: inherit; }

.tabstrip { height: 34px; background: #202124; display: flex; align-items: center; padding-left: 8px; font: 12px "Open Sans", sans-serif; }
.tab { width: 240px; height: 34px; background: #35363a; border-radius: 8px 8px 0 0; display: flex; align-items: center; padding: 0 11px 0 12px; color: #fff; }
.favicon { width: 16px; height: 16px; margin-right: 8px; }
.tab-title { flex: 1; letter-spacing: -.36px; }
.tab-close { width: 10px; height: 10px; }
.new-tab { width: 12px; height: 12px; margin-left: 16px; }
.window-controls { margin-left: auto; display: flex; gap: 34px; padding: 0 17px 6px 0; }
.window-controls svg { width: 12px; height: 12px; }

.toolbar { height: 37px; background: #35363a; border-bottom: 1px solid #5b5c60; display: flex; align-items: center; padding: 0 19px 0 14px; }
.nav-icon { width: 16px; height: 16px; margin-right: 16px; }
.omnibox { flex: 1; height: 28px; margin-right: 15px; border-radius: 14px; background: #202124; display: flex; align-items: center; padding: 0 10px 0 11px; margin-left: -2px; font: 14px "Open Sans", sans-serif; color: #999da2; }
.info { width: 14px; height: 14px; margin-right: 9px; }
.url { letter-spacing: -.38px; margin-top: -1px; }
.url b { color: #fff; font-weight: 400; }
.omni-icons { margin-left: auto; display: flex; gap: 16px; }
.omni-icons svg { width: 16px; height: 16px; }
.panel { width: 14px; height: 14px; margin-right: 14px; }
.avatar { width: 22px; height: 22px; margin-right: 19px; }
.more { width: 4px; height: 14px; }

.infobar { height: 44px; background: #35363a; color: #fff; display: flex; align-items: center; justify-content: space-between; padding: 0 19px 0 16px; font: 12px "Open Sans", sans-serif; letter-spacing: .17px; }
.infobar svg { width: 11px; height: 11px; }

.viewport { height: 925px; position: relative; display: flex; z-index: 1; }
.page { width: 1903px; }
.navbar { height: 62px; background: #000; display: flex; justify-content: flex-start; gap: 191px; padding: 21px 0 0 559px; color: #fff; font-size: 18px; line-height: 20px; letter-spacing: .16px; }
.scrollbar { width: 17px; background: #f1f1f1; box-shadow: inset 0 4px 4px -2px #888; padding-top: 77px; }
.scrollbar i { display: block; height: 736px; background: #888; }

.history { padding: 83px 158px 0 160px; }
.history-table { background: #424242; color: #fff; font-size: 14px; letter-spacing: .25px; }
.row { display: grid; grid-template-columns: 46.500px 116.500px 185px 191px 175px 175px 175px 149px 157px auto; justify-items: start; justify-content: start; align-items: center; padding-left: 16px; height: 52px; border-bottom: 1px solid #5b5b5b; }
.row:nth-last-child(2) { border-color: transparent; }
.head { height: 56px; letter-spacing: 0; }
.row button { height: 36px; padding: 0 16px; border-radius: 4px; background: #b0bec5; color: #000; font-size: 14px; letter-spacing: 1.25px; box-shadow: 0 3px 1px -2px rgba(0,0,0,.2), 0 2px 2px rgba(0,0,0,.14), 0 1px 5px rgba(0,0,0,.12); display: flex; align-items: center; white-space: nowrap; }
.row button:disabled { background: #595959; color: #a0a0a0; box-shadow: none; -webkit-text-stroke: .3px #a0a0a0; }
.row .fav { padding-left: 12px; }
.fav svg { width: 18px; height: 18px; margin-right: 8px; }
.paginator { height: 56px; display: flex; align-items: center; justify-content: flex-end; padding-right: 8px; font-size: 12px; letter-spacing: .4px; -webkit-text-stroke: .2px #fff; }
.select { width: 84px; height: 41px; border: 1px solid #8b8b8b; border-radius: 4px; margin: 1px 36px 0 8px; display: flex; align-items: center; justify-content: space-between; padding: 0 15px 0 16px; }
.select i { border: 5px solid transparent; border-top-color: #b9b9b9; border-bottom: 0; }
.range { margin-right: 32px; }
.pager { display: flex; }
.pager svg { width: 48px; height: 28px; fill: #5e5e5e; }

.map-row { display: flex; align-items: center; gap: 15px; margin: 6px 0 0 -11px; }
.map-mark { border: 10px solid #3f48cc; width: 497px; height: 341px; padding: 0 0 1px 1px; }
.map { position: relative; width: 476px; height: 320px; border: 1px solid #000; overflow: hidden; }
.tiles { width: 474px; height: 318px; }
.map-labels { font: 33px "Noto Sans", sans-serif; fill: #333; stroke: rgba(255,255,255,.65); stroke-width: 6px; stroke-linejoin: round; paint-order: stroke; }
.map-labels .city { font-size: 40px; }
.map-labels .park { font-style: italic; fill: #228b3b; font-size: 34px; }
.shield { font: 28px "Noto Sans", sans-serif; fill: #6c2840; }
.zoom { position: absolute; left: 10px; top: 10px; width: 34px; border: 2px solid rgba(0,0,0,.22); border-radius: 4px; background: #fff; background-clip: padding-box; text-align: center; font: bold 22px/30px "Liberation Sans", sans-serif; }
.zoom span { display: block; height: 30px; }
.zoom span + span { border-top: 1px solid #ccc; line-height: 28px; }
.credit { position: absolute; right: 0; bottom: 0; height: 16px; background: rgba(255,255,255,.8); padding: 0 6px 1px 5px; display: flex; align-items: center; gap: 4px; font-size: 11px; letter-spacing: .22px; color: #444; }
.credit a { color: #0078a8; }
.credit i { width: 11px; height: 8px; background: linear-gradient(#4c7be1 50%, #ffd500 50%); }

.note { font: 36px/44px "Open Sans", "Noto Sans", sans-serif; font-weight: 400; }
.note-map { color: #3f48cc; margin-top: -48px; letter-spacing: -.9px; }
.note-navbar { position: absolute; left: 1575px; top: 16px; color: #10d245; letter-spacing: -.8px; }
.note-history { position: absolute; left: 1765px; top: 757px; color: #00a8f3; letter-spacing: -.6px; }
.frame { position: absolute; border: 10px solid; pointer-events: none; }
.frame-nav { left: 0; top: -1px; width: 1912px; height: 80px; border-color: #10d245; border-bottom: 0; }
.frame-history { left: 4px; top: 69px; width: 1908px; height: 859px; border-color: #00a8f3; }

.fab { position: absolute; width: 56px; height: 56px; border-radius: 50%; background: #b0bec5; display: grid; place-items: center; padding: 0; top: 837px; box-shadow: 0 3px 5px -1px rgba(0,0,0,.2), 0 6px 10px rgba(0,0,0,.14), 0 1px 18px rgba(0,0,0,.12); }
.fab svg { width: 24px; height: 24px; }
.logout { left: 32px; }
.chat { left: 1817px; }
.plus { left: 953px; top: 853px; width: 40px; height: 40px; background: #f44336; color: #fff; font: 700 17px Lato, sans-serif; }

.taskbar { height: 40px; background: radial-gradient(ellipse 110px 34px at 1835px 0, #245986 0, rgba(20,60,100,.5) 55%, transparent), radial-gradient(ellipse 60px 50px at 1915px 10px, #2a5b8c, transparent), radial-gradient(ellipse 80px 30px at 1610px 40px, #0b2d49, transparent), linear-gradient(90deg, #02080d, #010e17 45%, #041c2e 80%, #05182a); display: flex; align-items: center; padding-left: 16px; color: #fff; }
.start, .search { width: 16px; height: 16px; }
.search { margin-left: 32px; }
.apps { display: flex; height: 40px; margin-left: 656px; }
.app { width: 49px; height: 40px; display: flex; justify-content: center; align-items: center; background: linear-gradient(#76b9ed, #76b9ed) 5px 38px / 0 2px no-repeat; }
.app svg { width: 24px; height: 24px; }
.open { background-size: 40px 2px; }
.multi { background: linear-gradient(90deg, #76b9ed 31px, #456f92 31px) 5px 38px / 40px 2px no-repeat; }
.active { background: linear-gradient(#3a4a55 38px, #76b9ed 38px); }
.ico8 { font: bold 8px "Liberation Sans", sans-serif; fill: #fff; }
.ico9 { font: 10px "Liberation Sans", sans-serif; fill: #fff; }
.ico6 { font: 6px "Liberation Mono", monospace; fill: #fff; }
.tray { margin-left: auto; display: flex; align-items: center; height: 40px; font: 12px "Open Sans", sans-serif; }
.tray svg { width: 16px; height: 16px; margin-right: 8px; }
.tray .t-up { width: 12px; height: 12px; margin-right: 10px; }
.lang { width: 24px; margin-left: 2px; letter-spacing: -.5px; }
.clock { width: 84px; text-align: center; line-height: 18px; letter-spacing: -.55px; display: flex; flex-direction: column; padding-right: 2px; }
.tray .notify { width: 24px; height: 24px; margin: 4px 12px 0 3px; }
.badge { font: 14px "Open Sans", sans-serif; fill: #fff; }
.peek { width: 5px; height: 40px; border-left: 1px solid #6c8ba6; }
```
